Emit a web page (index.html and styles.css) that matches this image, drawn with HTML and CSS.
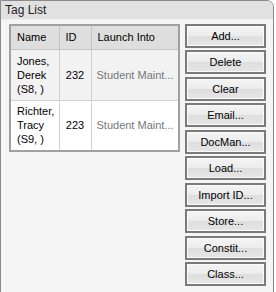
FILE: index.html
```html
<!DOCTYPE html>
<html lang="en">
<head>
  <meta charset="UTF-8">
  <title>Tag List</title>
  <link rel="stylesheet" href="styles.css">
</head>
<body>
  <div class="panel">
    <div class="panel-title">Tag List</div>
    <div class="panel-body">
      <table class="tag-table">
        <thead>
          <tr>
            <th class="col-name">Name</th>
            <th class="col-id">ID</th>
            <th class="col-launch">Launch Into</th>
          </tr>
        </thead>
        <tbody>
          <tr class="row-alt">
            <td>Jones,<br>Derek<br>(S8, )</td>
            <td class="id">232</td>
            <td class="launch">Student Maint...</td>
          </tr>
          <tr>
            <td>Richter,<br>Tracy<br>(S9, )</td>
            <td class="id">223</td>
            <td class="launch">Student Maint...</td>
          </tr>
        </tbody>
      </table>

      <div class="buttons">
        <button class="btn">Add...</button>
        <button class="btn">Delete</button>
        <button class="btn">Clear</button>
        <button class="btn">Email...</button>
        <button class="btn">DocMan...</button>
        <button class="btn">Load...</button>
        <button class="btn">Import ID...</button>
        <button class="btn">Store...</button>
        <button class="btn">Constit...</button>
        <button class="btn">Class...</button>
      </div>
    </div>
  </div>
</body>
</html>
```

FILE: styles.css
```css
* {
  margin: 0;
  padding: 0;
  box-sizing: border-box;
}
body {
  width: 276px;
  height: 292px;
  overflow: hidden;
  background: #ffffff;
  font-family: "Liberation Sans", Arial, sans-serif;
  font-size: 11px;
  color: #000;
}
.panel {
  width: 274px;
  height: 300px;
  border: 1px solid #8a8a8a;
  border-radius: 0 7px 0 0;
  background: #f5f5f5;
  overflow: hidden;
}
.panel-title {
  height: 19px;
  line-height: 19px;
  padding-left: 4px;
  background: #e1e1e1;
  border-bottom: 1px solid #f0f0f0;
  font-size: 12px;
  color: #222;
}
.panel-body {
  display: flex;
  align-items: flex-start;
  padding: 4px 0 0 8px;
}
.tag-table {
  width: 171px;
  flex: none;
  table-layout: fixed;
  border-collapse: collapse;
  border: 2px solid #a0a0a0;
  background: #fff;
}
.tag-table th {
  height: 24px;
  background: #dedede;
  font-weight: normal;
  text-align: left;
  padding: 0 6px;
  border-left: 1px solid #c4c4c4;
  border-bottom: 1px solid #c4c4c4;
}
.tag-table td {
  height: 51px;
  padding: 0 6px;
  line-height: 14px;
  border-left: 1px solid #d0d0d0;
  border-bottom: 1px solid #d0d0d0;
}
.col-name { width: 49px; }
.col-id { width: 32px; }
.row-alt td { background: #f2f2f2; }
.tag-table td.id { text-align: center; padding: 0 2px; }
.tag-table td.launch {
  color: #777777;
  white-space: nowrap;
  overflow: hidden;
  padding: 0 0 0 5px;
}
.buttons {
  display: flex;
  flex-direction: column;
  gap: 2.45px;
  margin-left: 5px;
}
.btn {
  width: 81px;
  height: 24px;
  border: 2px solid #7a7a7a;
  background: linear-gradient(to bottom, #f4f4f4 0%, #ececec 50%, #dedede 51%, #e6e6e6 100%);
  box-shadow: inset 0 0 0 1px #fbfbfb;
  font-family: "Liberation Sans", Arial, sans-serif;
  font-size: 11px;
  color: #000;
}
```
